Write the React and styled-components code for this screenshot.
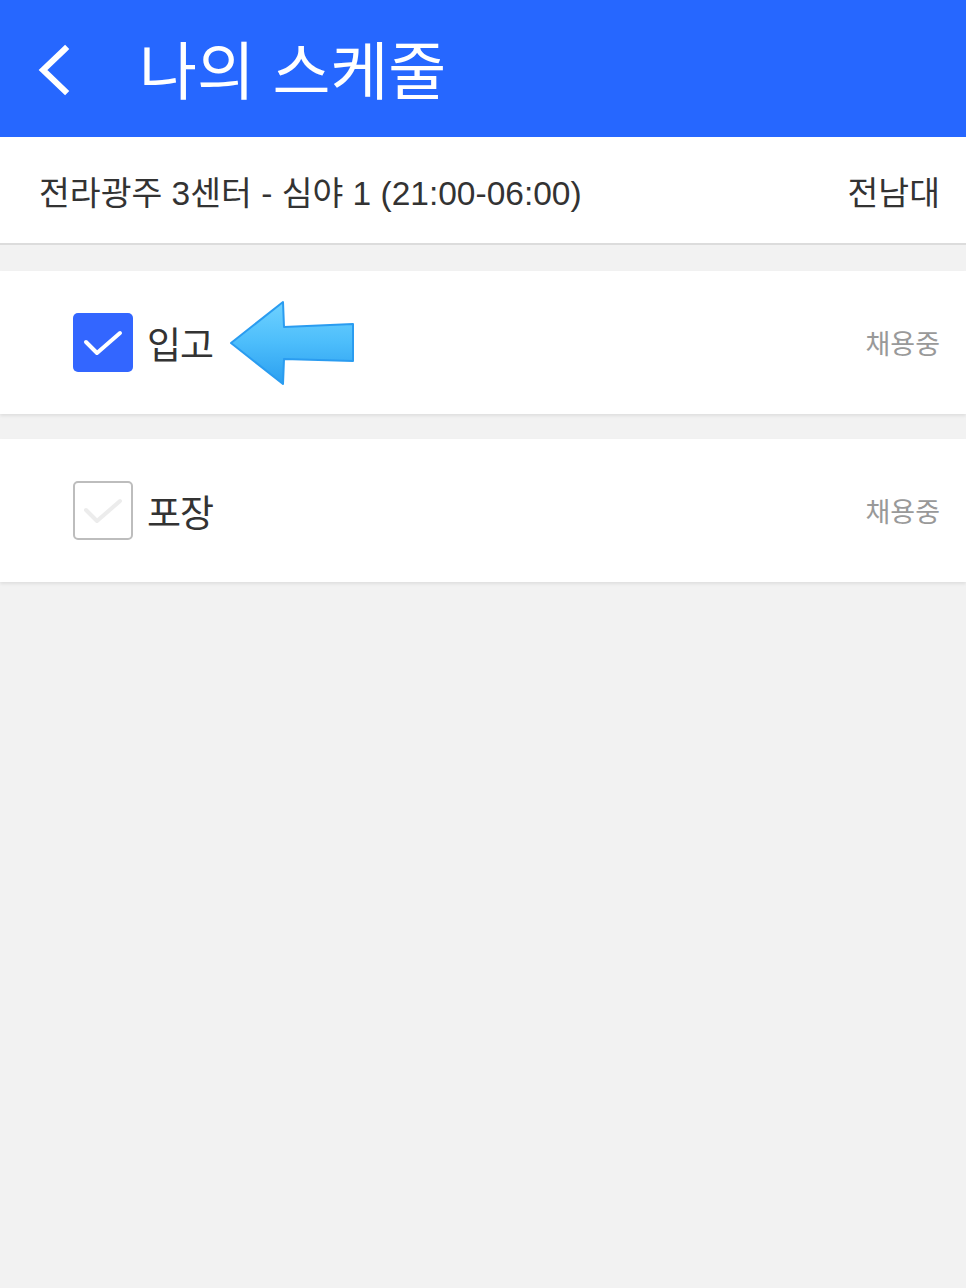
import React from 'react'
import styled, { createGlobalStyle } from 'styled-components'

const GlobalStyle = createGlobalStyle`
    html, body {
        margin: 0;
        padding: 0;
        background: #f2f2f2;
        font-family: "Liberation Sans", "Noto Sans CJK KR", sans-serif;
    }
`

const jobs = [
    { name: '입고', status: '채용중', checked: true },
    { name: '포장', status: '채용중', checked: false },
]

function App() {
    return (
        <Page>
            <GlobalStyle />
            <Header>
                <BackButton>
                    <svg width="40" height="56" viewBox="0 0 40 56">
                        <polyline points="30,8 8,29 30,50" fill="none" stroke="#fff" strokeWidth="6" strokeLinecap="square" />
                    </svg>
                </BackButton>
                <Title>나의 스케줄</Title>
            </Header>
            <InfoBar>
                <span>전라광주 3센터 - 심야 1 (21:00-06:00)</span>
                <span>전남대</span>
            </InfoBar>
            <List>
                {jobs.map((job, i) => (
                    <Card key={job.name}>
                        <Left>
                            <CheckBox checked={job.checked}>
                                <svg width="40" height="28" viewBox="0 0 40 28">
                                    <polyline points="3,13 14,24 37,4" fill="none" stroke={job.checked ? '#fff' : '#ececec'} strokeWidth="4" strokeLinecap="round" strokeLinejoin="round" />
                                </svg>
                            </CheckBox>
                            <Label>{job.name}</Label>
                            {i === 0 && <Arrow />}
                        </Left>
                        <Status>{job.status}</Status>
                    </Card>
                ))}
            </List>
        </Page>
    )
}

function Arrow() {
    return (
        <ArrowWrap>
            <svg width="128" height="86" viewBox="0 0 128 86">
                <defs>
                    <linearGradient id="arrowFill" x1="0" y1="0" x2="0" y2="1">
                        <stop offset="0" stopColor="#6fd2ff" />
                        <stop offset="0.5" stopColor="#4cbdfb" />
                        <stop offset="1" stopColor="#2b9ff0" />
                    </linearGradient>
                </defs>
                <polygon
                    points="2,43 54,2 55,27 124,24 124,61 55,59 54,84"
                    fill="url(#arrowFill)"
                    stroke="#2a9cf0"
                    strokeWidth="2"
                    strokeLinejoin="round"
                />
            </svg>
        </ArrowWrap>
    )
}

export default App

const Page = styled.div`
    min-height: 1288px;
    background: #f2f2f2;
`

const Header = styled.header`
    height: 137px;
    background: #2667ff;
    display: flex;
    align-items: center;
    padding-left: 35px;
    box-sizing: border-box;
`

const BackButton = styled.div`
    width: 40px;
    height: 56px;
    display: flex;
    margin-right: 64px;
`

const Title = styled.h1`
    margin: 0;
    color: #fff;
    font-size: 63px;
    font-weight: 400;
    line-height: 1;
    padding-top: 8px;
`

const InfoBar = styled.div`
    height: 108px;
    background: #fff;
    border-bottom: 2px solid #dcdcdc;
    box-sizing: border-box;
    display: flex;
    align-items: center;
    justify-content: space-between;
    padding: 0 26px 0 39px;
    font-size: 33.5px;
    color: #333;
`

const List = styled.div`
    display: flex;
    flex-direction: column;
    gap: 25px;
    padding-top: 26px;
`

const Card = styled.div`
    height: 143px;
    background: #fff;
    box-shadow: 0 2px 3px rgba(0, 0, 0, 0.08);
    display: flex;
    align-items: center;
    justify-content: space-between;
    padding: 0 26px 0 73px;
    box-sizing: border-box;
`

const Left = styled.div`
    display: flex;
    align-items: center;
`

const CheckBox = styled.div`
    width: 60px;
    height: 59px;
    box-sizing: border-box;
    border-radius: 5px;
    display: flex;
    align-items: center;
    justify-content: center;
    background: ${p => (p.checked ? '#3366ff' : '#fff')};
    border: ${p => (p.checked ? 'none' : '2.5px solid #bdbdbd')};
`

const Label = styled.span`
    margin-left: 14px;
    font-size: 37px;
    color: #333;
    letter-spacing: -1px;
`

const ArrowWrap = styled.div`
    margin-left: 16px;
    display: flex;
`

const Status = styled.span`
    font-size: 27px;
    color: #999;
`
